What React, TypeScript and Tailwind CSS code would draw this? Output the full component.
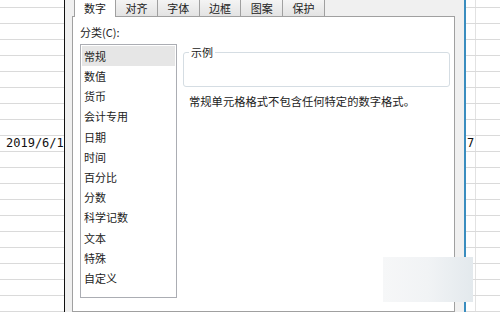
import React from "react";

const cjk = { fontFamily: '"Noto Sans CJK SC", "Noto Sans", sans-serif' };
const mono = { fontFamily: '"DejaVu Sans Mono", "Liberation Mono", monospace' };

const tabs = ["数字", "对齐", "字体", "边框", "图案", "保护"];
const categories = ["常规", "数值", "货币", "会计专用", "日期", "时间", "百分比", "分数", "科学记数", "文本", "特殊", "自定义"];
const rows = Array.from({ length: 20 }, (_, i) => i);

function SheetLeft() {
  return (
    <div className="w-[64px] shrink-0 flex flex-col overflow-hidden bg-white">
      <div className="h-[8px] shrink-0 border-b border-[#dadada]" />
      {rows.map((i) => (
        <div key={i} className="h-[16px] shrink-0 border-b border-[#dadada] pl-[6px] text-[12px] leading-[15px] text-[#111] whitespace-nowrap" style={mono}>
          {i === 8 ? "2019/6/1" : ""}
        </div>
      ))}
    </div>
  );
}

function SheetRight() {
  return (
    <div className="flex-1 flex flex-col overflow-hidden bg-white">
      <div className="h-[8px] shrink-0 flex border-b border-[#dadada]">
        <div className="w-[10px] border-r border-[#e2e2e2]" />
      </div>
      {rows.map((i) => (
        <div key={i} className="h-[16px] shrink-0 flex border-b border-[#dadada]">
          <div className="w-[10px] border-r border-[#e2e2e2] pl-[1px] text-[12px] leading-[15px] text-[#111]" style={mono}>
            {i === 8 ? "7" : ""}
          </div>
        </div>
      ))}
    </div>
  );
}

export default function App() {
  return (
    <div className="relative w-[500px] h-[312px] overflow-hidden flex bg-white text-[11px] text-[#222]" style={cjk}>
      <SheetLeft />

      <div className="w-[402px] shrink-0 h-full flex flex-col border-l border-[#111] border-r-2 border-r-[#3a8dbf] bg-[#f0f0f0] pl-[7px] pr-[9px]">
        <div className="h-[16px] shrink-0 flex items-end pl-[2px]">
          {tabs.map((t, i) =>
            i === 0 ? (
              <div key={t} className="relative z-10 -mb-px w-[42px] h-[17px] border-x border-[#a0a0a0] bg-white flex items-center justify-center pb-[1px]">
                {t}
              </div>
            ) : (
              <div key={t} className="w-[41.8px] h-[16px] border-r border-[#a0a0a0] bg-gradient-to-b from-[#f4f4f4] to-[#e3e3e3] flex items-center justify-center">
                {t}
              </div>
            )
          )}
        </div>

        <div className="flex-1 border border-[#a0a0a0] bg-white flex pl-[7px] pr-[4px] pt-[8px]">
          <div className="w-[97px] shrink-0 flex flex-col">
            <div className="h-[14px] leading-[14px] mb-[5px]">分类(C):</div>
            <div className="h-[254px] border border-[#abadb3] pt-[1px] px-[1px]">
              {categories.map((c, i) => (
                <div key={c} className={`h-[20.2px] flex items-center pl-[2px] ${i === 0 ? "bg-[#e6e6e6]" : ""}`}>
                  {c}
                </div>
              ))}
            </div>
          </div>

          <div className="ml-[6px] w-[267px] flex flex-col">
            <fieldset className="mt-[20px] h-[42px] border border-[#d5dde3] rounded-[3px]">
              <legend className="ml-[5px] px-[2px] leading-[14px]">示例</legend>
            </fieldset>
            <div className="mt-[7px] pl-[6px] leading-[14px] text-[11.3px]">常规单元格格式不包含任何特定的数字格式。</div>
          </div>
        </div>
      </div>

      <SheetRight />

      <div className="absolute left-[383px] top-[257px] w-[90px] h-[45px] bg-gradient-to-r from-[#f6f7f8] via-[#f1f3f5] to-[#e3e9ed]" />
    </div>
  );
}
